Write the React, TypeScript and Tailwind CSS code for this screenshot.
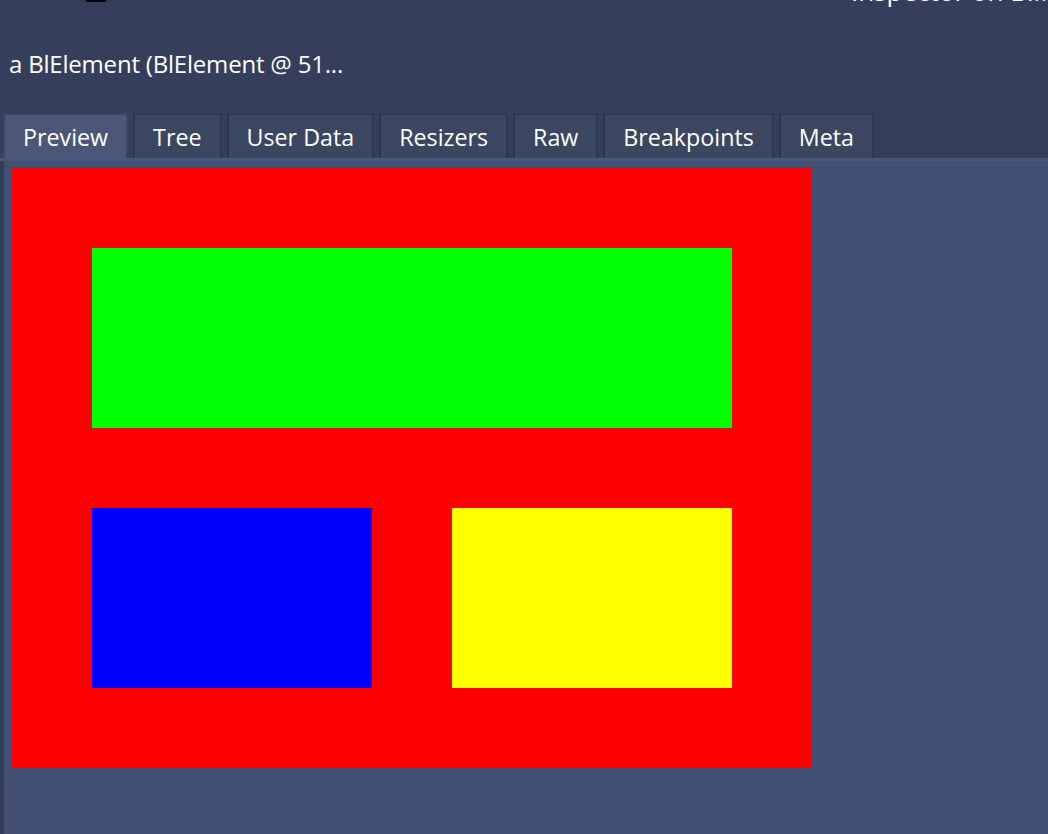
import React from "react";

const tabs = ["Preview", "Tree", "User Data", "Resizers", "Raw", "Breakpoints", "Meta"];

export default function App() {
  return (
    <div
      className="relative flex h-[834px] w-[1048px] flex-col overflow-hidden bg-[#353e5b] text-white"
      style={{ fontFamily: '"Source Sans Pro", "Open Sans", "Noto Sans", sans-serif' }}
    >
      {/* window chrome remnants */}
      <div className="absolute left-[86px] top-0 h-[2px] w-[20px] bg-black" />
      <div className="absolute left-[851px] top-[-22px] whitespace-nowrap text-[26px] leading-none">
        Inspector on Bl...
      </div>

      {/* title */}
      <div className="h-[113px] pl-[9px] pt-[49px] text-[24px] leading-[30px] tracking-[-0.2px]">
        a BlElement (BlElement @ 51...
      </div>

      {/* tabs */}
      <div className="flex h-[45px] gap-[5px] pl-[3px]">
        {tabs.map((t, i) => (
          <div
            key={t}
            className={
              "flex items-center px-[18px] pt-[2px] text-[23.25px] border-[2px] border-b-0 " +
              (i === 0
                ? "border-[#3a4463] bg-[#4c5679]"
                : "border-[#2f3852] bg-[#3b4661]")
            }
          >
            {t}
          </div>
        ))}
      </div>
      <div className="h-[3px] bg-[#4c5679]" />

      {/* content */}
      <div className="flex flex-1 bg-[#414f73]">
        <div className="w-[4px] bg-[#333c5a]" />
        <div className="pl-[8px] pt-[7px]">
          <div className="flex h-[600px] w-[800px] flex-col gap-[80px] bg-[#ff0000] p-[80px]">
            <div className="h-[180px] w-[640px] bg-[#00ff00]" />
            <div className="flex gap-[80px]">
              <div className="h-[180px] w-[280px] bg-[#0000ff]" />
              <div className="h-[180px] w-[280px] bg-[#ffff00]" />
            </div>
          </div>
        </div>
      </div>
    </div>
  );
}
